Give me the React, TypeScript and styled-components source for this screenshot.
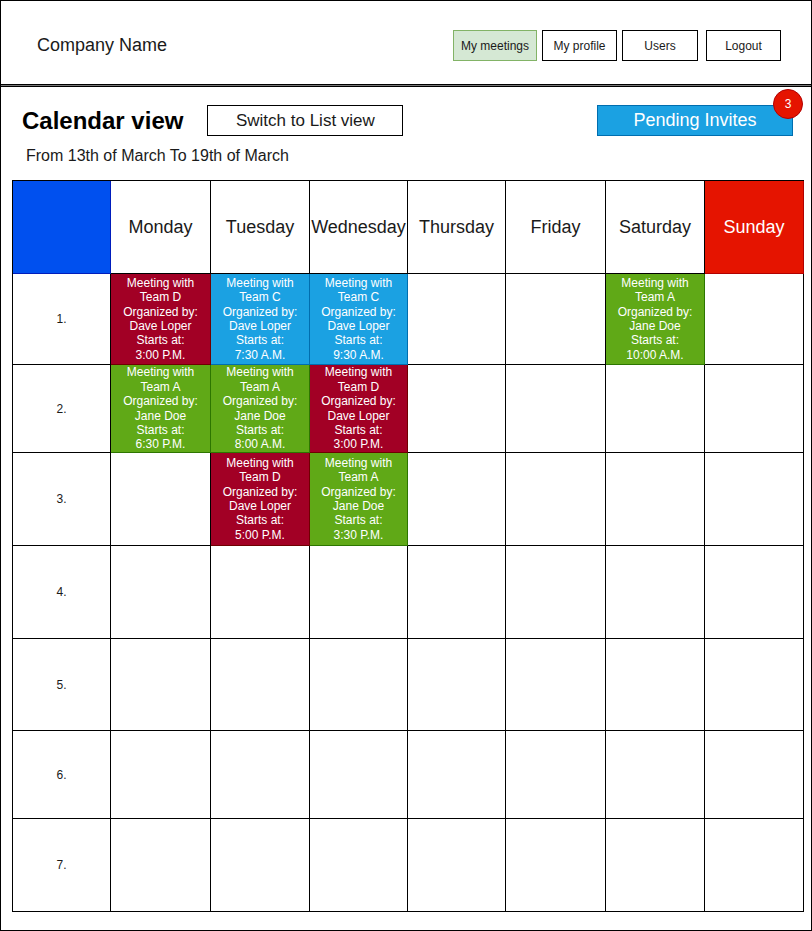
import React from "react";
import styled, { createGlobalStyle } from "styled-components";

const GlobalStyle = createGlobalStyle`
  html, body { margin: 0; padding: 0; background: #ffffff; }
  body { font-family: "Liberation Sans", Arial, Helvetica, sans-serif; }
  * { box-sizing: border-box; }
`;

const Frame = styled.div`
  width: 812px;
  height: 931px;
  border: 1px solid #000;
  display: flex;
  flex-direction: column;
  background: #fff;
`;

const Header = styled.header`
  height: 84px;
  border-bottom: 1px solid #000;
  display: flex;
  align-items: center;
  padding: 6px 30px 0 36px;
`;

const Divider = styled.div`
  height: 1px;
  background: #777;
`;

const Brand = styled.div`
  font-size: 18px;
  color: #1a1a1a;
  flex: 1;
`;

const Nav = styled.nav`
  display: flex;
  align-items: center;
`;

const NavButton = styled.button<{ $w: number; $ml: number; $active?: boolean }>`
  width: ${(p) => p.$w}px;
  height: 31px;
  margin-left: ${(p) => p.$ml}px;
  padding: 0;
  font-family: inherit;
  font-size: 12px;
  color: #1a1a1a;
  background: ${(p) => (p.$active ? "#d5e8d4" : "#fff")};
  border: 1px solid ${(p) => (p.$active ? "#82b366" : "#000")};
  cursor: pointer;
`;

const Main = styled.main`
  flex: 1;
  border-top: 1px solid #000;
  padding: 0 7px 0 11px;
  display: flex;
  flex-direction: column;
`;

const TitleRow = styled.div`
  margin-top: 18px;
  height: 31px;
  display: flex;
  align-items: center;
  padding: 0 11px 0 10px;
`;

const Title = styled.h1`
  margin: 0;
  font-size: 24px;
  font-weight: bold;
  color: #000;
  line-height: 31px;
`;

const SwitchButton = styled.button`
  margin-left: 24px;
  width: 196px;
  height: 31px;
  padding: 0;
  font-family: inherit;
  font-size: 17px;
  color: #1a1a1a;
  background: #fff;
  border: 1px solid #000;
`;

const Spacer = styled.div`
  flex: 1;
`;

const PendingWrap = styled.div`
  position: relative;
  width: 196px;
  height: 31px;
`;

const PendingButton = styled.button`
  width: 100%;
  height: 100%;
  padding: 0;
  font-family: inherit;
  font-size: 18px;
  color: #fff;
  background: #1ba1e2;
  border: 1px solid #006eaf;
`;

const Badge = styled.span`
  position: absolute;
  left: 176px;
  top: -16px;
  width: 30px;
  height: 30px;
  border-radius: 50%;
  background: #e51400;
  border: 1px solid #b20000;
  color: #fff;
  font-size: 12px;
  display: flex;
  align-items: center;
  justify-content: center;
`;

const DateRange = styled.div`
  margin-top: 11px;
  padding-left: 14px;
  font-size: 16px;
  line-height: 18px;
  color: #1a1a1a;
`;

const Grid = styled.div`
  margin-top: 15px;
  display: grid;
  grid-template-columns: 98px 100px 99px 98px 98px 100px 99px 99px;
  grid-template-rows: 93px 91px 88px 93px 93px 92px 88px 93px;
  border-left: 1px solid #000;
  border-top: 1px solid #000;
  width: 792px;
`;

const Cell = styled.div<{ $bg?: string; $stroke?: string }>`
  border-right: 1px solid ${(p) => p.$stroke || "#000"};
  border-bottom: 1px solid ${(p) => p.$stroke || "#000"};
  background: ${(p) => p.$bg || "#fff"};
  display: flex;
  align-items: center;
  justify-content: center;
  text-align: center;
  overflow: hidden;
`;

const DayCell = styled(Cell)<{ $light?: boolean }>`
  font-size: 18px;
  color: ${(p) => (p.$light ? "#fff" : "#1a1a1a")};
`;

const RowLabel = styled(Cell)`
  font-size: 12px;
  color: #1a1a1a;
`;

const EventText = styled.div`
  font-size: 12px;
  line-height: 14.4px;
  color: #fff;
  white-space: nowrap;
`;

type Kind = "red" | "blue" | "green";
const palette: Record<Kind, { bg: string; stroke: string }> = {
  red: { bg: "#a20025", stroke: "#6f0000" },
  blue: { bg: "#1ba1e2", stroke: "#006eaf" },
  green: { bg: "#60a917", stroke: "#2d7600" },
};

type Meeting = { kind: Kind; team: string; by: string; at: string };

const D = (at: string): Meeting => ({ kind: "red", team: "Team D", by: "Dave Loper", at });
const C = (at: string): Meeting => ({ kind: "blue", team: "Team C", by: "Dave Loper", at });
const A = (at: string): Meeting => ({ kind: "green", team: "Team A", by: "Jane Doe", at });

const days = ["Monday", "Tuesday", "Wednesday", "Thursday", "Friday", "Saturday", "Sunday"];

const schedule: (Meeting | null)[][] = [
  [D("3:00 P.M."), C("7:30 A.M."), C("9:30 A.M."), null, null, A("10:00 A.M."), null],
  [A("6:30 P.M."), A("8:00 A.M."), D("3:00 P.M."), null, null, null, null],
  [null, D("5:00 P.M."), A("3:30 P.M."), null, null, null, null],
  [null, null, null, null, null, null, null],
  [null, null, null, null, null, null, null],
  [null, null, null, null, null, null, null],
  [null, null, null, null, null, null, null],
];

const navItems = [
  { label: "My meetings", w: 84, ml: 0, active: true },
  { label: "My profile", w: 75, ml: 5 },
  { label: "Users", w: 76, ml: 5 },
  { label: "Logout", w: 75, ml: 8 },
];

export default function App() {
  return (
    <>
      <GlobalStyle />
      <Frame>
        <Header>
          <Brand>Company Name</Brand>
          <Nav>
            {navItems.map((n) => (
              <NavButton key={n.label} $w={n.w} $ml={n.ml} $active={n.active}>
                {n.label}
              </NavButton>
            ))}
          </Nav>
        </Header>
        <Divider />
        <Main>
          <TitleRow>
            <Title>Calendar view</Title>
            <SwitchButton>Switch to List view</SwitchButton>
            <Spacer />
            <PendingWrap>
              <PendingButton>Pending Invites</PendingButton>
              <Badge>3</Badge>
            </PendingWrap>
          </TitleRow>
          <DateRange>From 13th of March To 19th of March</DateRange>
          <Grid>
            <Cell $bg="#0050ef" $stroke="#001dbc" />
            {days.map((d) =>
              d === "Sunday" ? (
                <DayCell key={d} $bg="#e51400" $stroke="#b20000" $light>
                  {d}
                </DayCell>
              ) : (
                <DayCell key={d}>{d}</DayCell>
              )
            )}
            {schedule.map((row, ri) => (
              <React.Fragment key={ri}>
                <RowLabel>{ri + 1}.</RowLabel>
                {row.map((m, ci) =>
                  m ? (
                    <Cell key={ci} $bg={palette[m.kind].bg} $stroke={palette[m.kind].stroke}>
                      <EventText>
                        Meeting with
                        <br />
                        {m.team}
                        <br />
                        Organized by:
                        <br />
                        {m.by}
                        <br />
                        Starts at:
                        <br />
                        {m.at}
                      </EventText>
                    </Cell>
                  ) : (
                    <Cell key={ci} />
                  )
                )}
              </React.Fragment>
            ))}
          </Grid>
        </Main>
      </Frame>
    </>
  );
}
